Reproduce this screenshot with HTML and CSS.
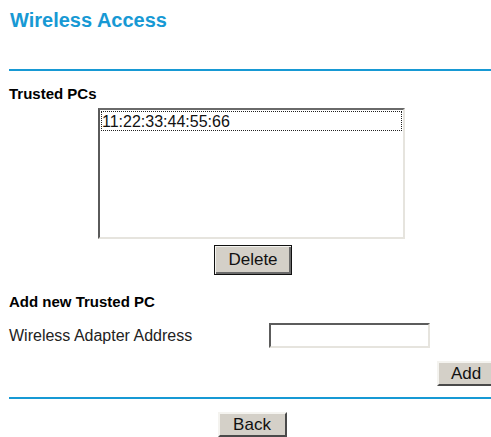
FILE: index.html
```html
<!DOCTYPE html>
<html>
<head>
<meta charset="utf-8">
<title>Wireless Access</title>
<link rel="stylesheet" href="styles.css">
</head>
<body>
<div class="page">
  <h1 class="title">Wireless Access</h1>
  <div class="rule rule-top"></div>

  <h2 class="section section-trusted">Trusted PCs</h2>
  <div class="trusted">
    <div class="listbox">
      <div class="list-item">11:22:33:44:55:66</div>
    </div>
    <button class="btn btn-default btn-delete" type="button">Delete</button>
  </div>

  <h2 class="section section-add">Add new Trusted PC</h2>
  <div class="field-row">
    <label class="field-label" for="mac">Wireless Adapter Address</label>
    <input class="field-input" id="mac" type="text">
  </div>
  <div class="add-row">
    <button class="btn btn-add" type="button">Add</button>
  </div>

  <div class="rule rule-bottom"></div>
  <div class="back-row">
    <button class="btn btn-back" type="button">Back</button>
  </div>
</div>
</body>
</html>
```

FILE: styles.css
```css
html, body {
  margin: 0;
  padding: 0;
  overflow: hidden;
  background: #ffffff;
}

body {
  font-family: "Liberation Sans", Arial, sans-serif;
  color: #222222;
}

.page {
  width: 486px;
  margin-left: 9px;
  display: flex;
  flex-direction: column;
}

.title {
  margin: 10px 0 0 1px;
  font-size: 20px;
  line-height: 21px;
  font-weight: bold;
  color: #1799d4;
}

.rule {
  height: 2px;
  background: #1799d4;
}

.rule-top {
  margin-top: 38px;
}

.section {
  margin: 0;
  font-size: 15px;
  line-height: 18px;
  font-weight: bold;
  color: #000000;
}

.section-trusted {
  margin-top: 14px;
}

.trusted {
  display: flex;
  flex-direction: column;
  align-items: center;
}

.listbox {
  margin-top: 5px;
  margin-right: 1px;
  width: 301px;
  height: 125px;
  padding: 1px;
  box-sizing: content-box;
  border: 2px solid;
  border-color: #6a6a6a #e6e4de #e6e4de #5a5a5a;
  background: #ffffff;
  display: flex;
  flex-direction: column;
}

.list-item {
  height: 18px;
  border: 1px dotted #222222;
  font-size: 16px;
  line-height: 19px;
  color: #111111;
}

.btn {
  font-family: "Liberation Sans", Arial, sans-serif;
  font-size: 17px;
  color: #111111;
  background: #d4d0c8;
  border: 2px solid;
  border-color: #f4f3ef #4a4a4a #4a4a4a #f4f3ef;
  padding: 0;
  margin: 0;
  height: 25px;
  box-sizing: border-box;
}

.btn-default {
  border: 1px solid #111111;
  box-shadow: inset 1px 1px 0 #f4f3ef, inset -2px -2px 0 #6a6a6a;
}

.btn-delete {
  margin-top: 6px;
  margin-left: 2px;
  width: 78px;
  height: 30px;
}

.section-add {
  margin-top: 18px;
}

.field-row {
  margin-top: 12px;
  display: flex;
  align-items: center;
}

.field-label {
  width: 260px;
  font-size: 16px;
  line-height: 19px;
  color: #222222;
}

.field-input {
  width: 161px;
  height: 25px;
  box-sizing: border-box;
  margin: 0;
  border: 2px solid;
  border-color: #5c5c5c #e6e4de #e6e4de #5c5c5c;
  background: #ffffff;
  outline: none;
}

.add-row {
  margin-top: 13px;
  display: flex;
  justify-content: flex-end;
}

.btn-add {
  width: 58px;
}

.rule-bottom {
  margin-top: 11px;
}

.back-row {
  margin-top: 13px;
  display: flex;
  justify-content: center;
}

.btn-back {
  width: 69px;
}
```
